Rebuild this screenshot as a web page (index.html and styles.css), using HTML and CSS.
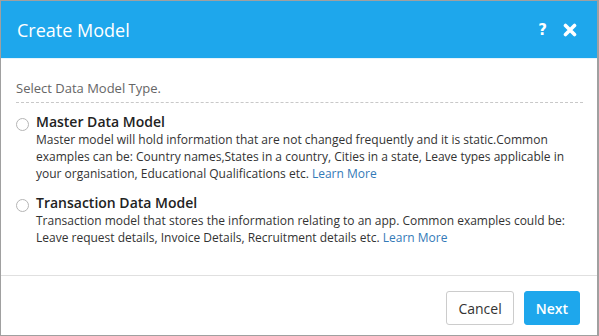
FILE: index.html
```html
<!DOCTYPE html>
<html lang="en">
<head>
  <meta charset="UTF-8" />
  <title>Create Model</title>
  <link rel="stylesheet" href="styles.css">
</head>
<body>
  <div class="modal">
    <header class="modal-header">
      <h1>Create Model</h1>
      <div class="header-tools">
        <span class="help">?</span>
        <svg class="close" viewBox="0 0 14 14" width="14" height="14">
          <path d="M2.5 2.5 L11.5 11.5 M11.5 2.5 L2.5 11.5" stroke="#fff" stroke-width="3.6" stroke-linecap="round" />
        </svg>
      </div>
    </header>

    <section class="modal-body">
      <p class="prompt">Select Data Model Type.</p>

      <label class="option">
        <span class="radio"></span>
        <span class="option-text">
          <strong>Master Data Model</strong>
          <span class="desc">Master model will hold information that are not changed frequently and it is static.Common examples can be: Country names,States in a country, Cities in a state, Leave types applicable in your organisation, Educational Qualifications etc. <a href="#">Learn More</a></span>
        </span>
      </label>

      <label class="option">
        <span class="radio"></span>
        <span class="option-text">
          <strong>Transaction Data Model</strong>
          <span class="desc">Transaction model that stores the information relating to an app. Common examples could be: Leave request details, Invoice Details, Recruitment details etc. <a href="#">Learn More</a></span>
        </span>
      </label>
    </section>

    <footer class="modal-footer">
      <button class="btn btn-default">Cancel</button>
      <button class="btn btn-primary">Next</button>
    </footer>
  </div>
</body>
</html>
```

FILE: styles.css
```css
:root {
  --blue: #1ea7ec;
  --text: #333;
  --muted: #666;
  --link: #337ab7;
}

body {
  margin: 0;
  font-family: 'Open Sans', sans-serif;
  color: var(--text);
  background: #fff;
}

.modal {
  width: 599px;
  height: 336px;
  box-sizing: border-box;
  border: 1px solid #a0a0a0;
  border-right-width: 2px;
  display: flex;
  flex-direction: column;
}

.modal-header {
  background-color: var(--blue);
  height: 57px;
  flex: none;
  display: flex;
  align-items: center;
  justify-content: space-between;
  padding: 0 20px 0 16px;
  border-bottom: 1px solid #e6f4fc;
}

.modal-header h1 {
  margin: 0;
  color: #fff;
  font-size: 18px;
  font-weight: 400;
  padding-top: 1px;
}

.header-tools {
  display: flex;
  align-items: center;
  gap: 16px;
}

.help {
  color: #fff;
  font-weight: 700;
  font-size: 15px;
  font-family: 'DejaVu Sans', sans-serif;
}

.modal-body {
  padding: 20px 14px 0 15px;
  flex-grow: 1;
}

.prompt {
  margin: 0;
  padding-bottom: 5px;
  font-size: 13px;
  color: var(--muted);
  border-bottom: 1px dashed #c8c8c8;
}

.option {
  display: flex;
  align-items: flex-start;
  margin-top: 10px;
  margin-bottom: 12px;
}

.radio {
  flex: none;
  width: 11px;
  height: 11px;
  border: 1px solid #b5b5b5;
  border-radius: 50%;
  margin: 5px 7px 0 0;
}

.option-text strong {
  display: block;
  font-size: 14px;
  font-weight: 600;
  color: #222;
  line-height: 18px;
}

.desc {
  display: block;
  font-size: 12px;
  line-height: 17px;
}

.desc a {
  color: var(--link);
  text-decoration: none;
}

.modal-footer {
  flex: none;
  border-top: 1px solid #e0e0e0;
  height: 60px;
  box-sizing: border-box;
  display: flex;
  justify-content: flex-end;
  align-items: flex-start;
  gap: 10px;
  padding: 15px 17px 0 0;
}

.btn {
  font-family: 'Open Sans', sans-serif;
  font-size: 14px;
  height: 34px;
  border-radius: 3px;
  padding: 0 11px;
  cursor: pointer;
}

.btn-default {
  background: #fff;
  border: 1px solid #ccc;
  color: #333;
}

.btn-primary {
  background: var(--blue);
  border: 1px solid var(--blue);
  color: #fff;
  font-weight: 600;
}
```
